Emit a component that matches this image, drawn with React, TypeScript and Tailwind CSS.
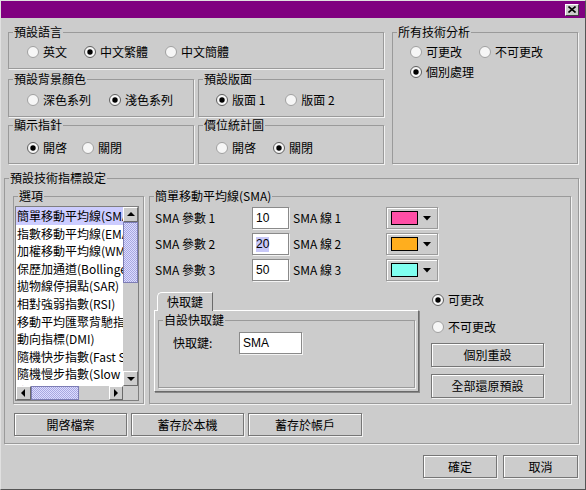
import React from "react";

type Kids = { children?: React.ReactNode; className?: string };

function Radio({ checked, label, className = "" }: { checked?: boolean; label: string; className?: string }) {
  return (
    <div className={`flex items-center gap-[4px] h-[16px] ${className}`}>
      <svg width="12" height="12" viewBox="0 0 12 12" className="shrink-0">
        <circle cx="6" cy="6" r="5.5" fill="#f6f6f6" stroke={checked ? "#5e5e5e" : "#a0a0a0"} />
        {checked && <circle cx="6" cy="6" r="2.7" fill="#000" />}
      </svg>
      <span className="leading-[16px] whitespace-pre">{label}</span>
    </div>
  );
}

function Group({ title, className = "", children }: Kids & { title: string }) {
  return (
    <fieldset className={`min-w-0 border border-[#9a9a9a] shadow-[1px_1px_0_#f2f2f2] ${className}`}>
      <legend className="ml-[4px] px-[1px] leading-[12px] h-[12px] whitespace-pre">{title}</legend>
      {children}
    </fieldset>
  );
}

function Btn({ children, className = "" }: Kids) {
  return (
    <button
      type="button"
      className={`flex items-center justify-center bg-[#cccccc] border border-[#767676] shadow-[inset_1px_1px_0_#ffffff,1px_1px_0_#f2f2f2] leading-[16px] text-[12px] ${className}`}
    >
      {children}
    </button>
  );
}

function Arrow({ dir }: { dir: "up" | "down" | "left" | "right" }) {
  const d =
    dir === "up"
      ? "M1 6 L9 6 L5 2 Z"
      : dir === "down"
      ? "M1 3 L9 3 L5 7 Z"
      : dir === "left"
      ? "M6 1 L6 9 L2 5 Z"
      : "M3 1 L3 9 L7 5 Z";
  return (
    <div className="w-[15px] h-[15px] shrink-0 bg-[#cccccc] border border-t-white border-l-white border-r-[#6a6a6a] border-b-[#6a6a6a] flex items-center justify-center">
      <svg width="10" height="10" viewBox="0 0 10 10">
        <path d={d} fill="#000" />
      </svg>
    </div>
  );
}

function ColorPick({ color }: { color: string }) {
  return (
    <div className="w-[52px] h-[22px] border border-[#9a9a9a] shadow-[inset_1px_1px_0_#ffffff,1px_1px_0_#f2f2f2] flex items-center pl-[4px]">
      <div className={`w-[27px] h-[14px] border border-black ${color}`} />
      <svg width="8" height="5" viewBox="0 0 8 5" className="ml-[5px]">
        <path d="M0 0 H8 L4 4.5 Z" fill="#000" />
      </svg>
    </div>
  );
}

const items = [
  "簡單移動平均線(SMA)",
  "指數移動平均線(EMA)",
  "加權移動平均線(WMA)",
  "保歷加通道(Bollinger Bands)",
  "拋物線停損點(SAR)",
  "相對強弱指數(RSI)",
  "移動平均匯聚背馳指標(MACD)",
  "動向指標(DMI)",
  "隨機快步指數(Fast Stochastic)",
  "隨機慢步指數(Slow Stochastic)",
  "完全隨機指數(Full Stochastic)",
];

const thumb =
  "bg-[#ccccff] bg-[conic-gradient(#a8a8e0_25%,#dcdcff_0_50%,#a8a8e0_0_75%,#dcdcff_0)] bg-[length:2px_2px] border border-[#7d7db5]";

function ListBox() {
  return (
    <div className="ml-[1px] mt-[4px] w-[124px] h-[195px] border border-[#7f7f7f] bg-white flex flex-col">
      <div className="flex h-[179px]">
        <div className="w-[107px] overflow-hidden whitespace-nowrap">
          {items.map((t, i) => (
            <div
              key={t}
              className={`h-[17.6px] leading-[17.6px] pl-[1px] ${i === 0 ? "bg-[#ccccff]" : ""}`}
            >
              {t}
            </div>
          ))}
        </div>
        <div className="w-[15px] bg-[#cccccc] flex flex-col">
          <Arrow dir="up" />
          <div className={`h-[61px] ${thumb}`} />
          <div className="flex-1" />
          <Arrow dir="down" />
        </div>
      </div>
      <div className="flex h-[14px]">
        <div className="w-[107px] bg-[#cccccc] flex">
          <div className="h-[14px] w-[15px] bg-[#cccccc] border border-t-white border-l-white border-r-[#6a6a6a] border-b-[#6a6a6a] flex items-center justify-center">
            <svg width="10" height="10" viewBox="0 0 10 10">
              <path d="M6 1 L6 9 L2 5 Z" fill="#000" />
            </svg>
          </div>
          <div className={`w-[48px] h-[14px] ${thumb}`} />
          <div className="flex-1" />
          <div className="h-[14px] w-[14px] bg-[#cccccc] border border-t-white border-l-white border-r-[#6a6a6a] border-b-[#6a6a6a] flex items-center justify-center">
            <svg width="10" height="10" viewBox="0 0 10 10">
              <path d="M3 1 L3 9 L7 5 Z" fill="#000" />
            </svg>
          </div>
        </div>
        <div className="w-[15px] bg-[#cccccc]" />
      </div>
    </div>
  );
}

function Field({ children, className = "" }: Kids) {
  return (
    <div
      className={`h-[22px] bg-white border border-[#8a8a8a] shadow-[1px_1px_0_#f4f4f4] flex items-center pl-[3px] font-['Liberation_Sans',sans-serif] text-[12px] ${className}`}
    >
      {children}
    </div>
  );
}

function SmaRow({ n, value, color, selected }: { n: number; value: string; color: string; selected?: boolean }) {
  return (
    <div className="flex items-center h-[22px]">
      <div className="w-[98px] pl-[1px] whitespace-pre">{`SMA 參數 ${n}`}</div>
      <Field className="w-[37px]">
        {selected ? <span className="bg-[#c8c8f8] leading-[15px]">{value}</span> : value}
      </Field>
      <div className="w-[97px] pl-[4px] whitespace-pre">{`SMA 線 ${n}`}</div>
      <ColorPick color={color} />
    </div>
  );
}

export default function App() {
  return (
    <div className="w-[586px] h-[490px] bg-[#cccccc] border border-t-[#e0e0e0] border-l-[#e0e0e0] border-r-[#555555] border-b-[#555555] flex flex-col text-[12px] leading-[16px] text-black font-['Noto_Sans_CJK_TC','Noto_Sans_CJK_SC',sans-serif]">
      {/* title bar */}
      <div className="h-[17px] bg-[#800080] flex items-center justify-end pr-[6px]">
        <div className="w-[14px] h-[12px] bg-[#cccccc] border border-t-white border-l-white border-r-[#404040] border-b-[#404040] flex items-center justify-center">
          <svg width="8" height="7" viewBox="0 0 8 7">
            <path d="M0.5 0.5 L7.5 6.5 M7.5 0.5 L0.5 6.5" stroke="#000" strokeWidth="1.6" />
          </svg>
        </div>
      </div>

      {/* top section */}
      <div className="flex gap-[8px] ml-[7px] mt-[8px]">
        <div className="w-[376px] flex flex-col">
          <Group title="預設語言" className="h-[43px]">
            <div className="flex gap-[17px] pl-[18px] pt-[6px]">
              <Radio label="英文" />
              <Radio label="中文繁體" checked />
              <Radio label="中文簡體" />
            </div>
          </Group>
          <div className="flex gap-[4px] mt-[4px]">
            <Group title="預設背景顏色" className="w-[186px] h-[44px]">
              <div className="flex gap-[18px] pl-[18px] pt-[7px]">
                <Radio label="深色系列" />
                <Radio label="淺色系列" checked />
              </div>
            </Group>
            <Group title="預設版面" className="w-[186px] h-[44px]">
              <div className="flex gap-[20px] pl-[17px] pt-[7px]">
                <Radio label="版面 1" checked />
                <Radio label="版面 2" />
              </div>
            </Group>
          </div>
          <div className="flex gap-[4px] mt-[2px]">
            <Group title="顯示指針" className="w-[186px] h-[45px]">
              <div className="flex gap-[15px] pl-[18px] pt-[9px]">
                <Radio label="開啓" checked />
                <Radio label="關閉" />
              </div>
            </Group>
            <Group title="價位統計圖" className="w-[186px] h-[45px]">
              <div className="flex gap-[17px] pl-[17px] pt-[9px]">
                <Radio label="開啓" />
                <Radio label="關閉" checked />
              </div>
            </Group>
          </div>
        </div>
        <Group title="所有技術分析" className="w-[186px] h-[138px]">
          <div className="flex flex-col gap-[4px] pl-[17px] pt-[6px]">
            <div className="flex gap-[17px]">
              <Radio label="可更改" />
              <Radio label="不可更改" />
            </div>
            <Radio label="個別處理" checked />
          </div>
        </Group>
      </div>

      {/* technical indicators */}
      <Group title="預設技術指標設定" className="ml-[3px] mt-[8px] w-[575px] h-[272px]">
        <div className="flex flex-col pl-[8px] pt-[6px]">
          <div className="flex gap-[5px]">
            <Group title="選項" className="w-[131px] h-[214px]">
              <ListBox />
            </Group>
            <Group title="簡單移動平均線(SMA)" className="w-[422px] h-[214px]">
              <div className="flex flex-col pl-[4px] pt-[5px]">
                <div className="flex flex-col gap-[4px]">
                  <SmaRow n={1} value="10" color="bg-[#ff4fa6]" />
                  <SmaRow n={2} value="20" color="bg-[#ffae1e]" selected />
                  <SmaRow n={3} value="50" color="bg-[#80fff0]" />
                </div>
                <div className="flex mt-[11px]">
                  <div className="w-[265px] flex flex-col">
                    <div className="relative z-10 ml-[3px] -mb-[1px] w-[56px] h-[19px] bg-[#cccccc] border-l border-t border-r border-l-white border-t-white border-r-[#6a6a6a] rounded-tl-[5px] flex items-center justify-center leading-[16px]">
                      快取鍵
                    </div>
                    <div className="w-[265px] h-[82px] border border-l-white border-t-white border-r-[#6a6a6a] border-b-[#6a6a6a] shadow-[1px_1px_0_#8a8a8a] pl-[3px] pt-[3px]">
                      <Group title="自設快取鍵" className="w-[257px] h-[74px]">
                        <div className="flex items-center pl-[14px] pt-[6px]">
                          <div className="w-[66px] whitespace-pre">快取鍵:</div>
                          <Field className="w-[63px] h-[21px]">SMA</Field>
                        </div>
                      </Group>
                    </div>
                  </div>
                  <div className="ml-[12px] w-[113px] flex flex-col">
                    <Radio label="可更改" checked className="ml-[1px] h-[13px]" />
                    <Radio label="不可更改" className="ml-[1px] mt-[11px] h-[13px]" />
                    <Btn className="mt-[8px] w-[113px] h-[24px]">個別重設</Btn>
                    <Btn className="mt-[7px] w-[113px] h-[24px]">全部還原預設</Btn>
                  </div>
                </div>
              </div>
            </Group>
          </div>
          <div className="flex gap-[4px] mt-[9px] ml-[1px]">
            <Btn className="w-[113px] h-[23px]">開啓檔案</Btn>
            <Btn className="w-[113px] h-[23px]">蓄存於本機</Btn>
            <Btn className="w-[114px] h-[23px]">蓄存於帳戶</Btn>
          </div>
        </div>
      </Group>

      {/* bottom buttons */}
      <div className="flex justify-end gap-[6px] mt-[11px] pr-[7px]">
        <Btn className="w-[74px] h-[23px]">確定</Btn>
        <Btn className="w-[75px] h-[23px]">取消</Btn>
      </div>
    </div>
  );
}
